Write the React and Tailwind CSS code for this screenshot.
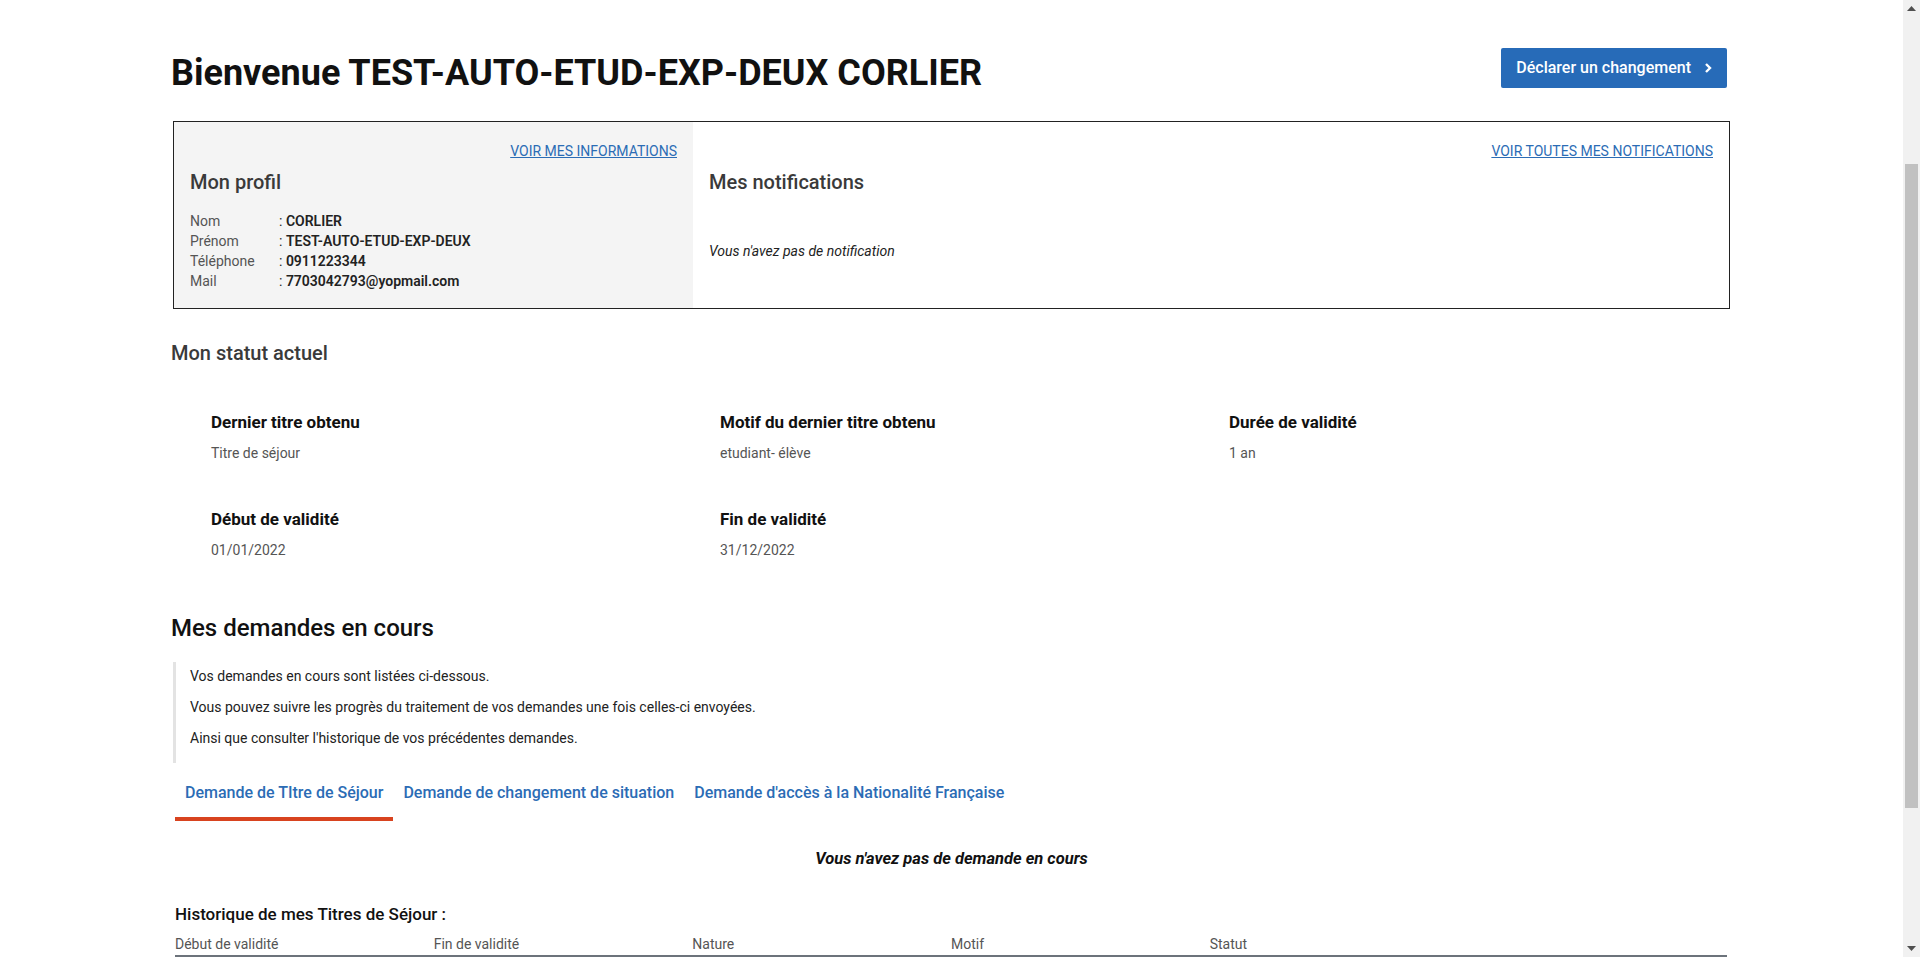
import React from 'react';

const profile = [
  { label: 'Nom', value: 'CORLIER' },
  { label: 'Prénom', value: 'TEST-AUTO-ETUD-EXP-DEUX' },
  { label: 'Téléphone', value: '0911223344' },
  { label: 'Mail', value: '7703042793@yopmail.com' },
];

const statut = [
  { label: 'Dernier titre obtenu', value: 'Titre de séjour' },
  { label: 'Motif du dernier titre obtenu', value: 'etudiant- élève' },
  { label: 'Durée de validité', value: '1 an' },
  { label: 'Début de validité', value: '01/01/2022' },
  { label: 'Fin de validité', value: '31/12/2022' },
];

const tabs = [
  'Demande de TItre de Séjour',
  'Demande de changement de situation',
  "Demande d'accès à la Nationalité Française",
];

const columns = ['Début de validité', 'Fin de validité', 'Nature', 'Motif', 'Statut', ''];

const ScrollBar = () => (
  <div className="w-[17px] shrink-0 bg-[#f1f1f1] flex flex-col items-center">
    <div className="h-[17px] flex items-center justify-center">
      <svg width="9" height="6" viewBox="0 0 9 6">
        <polygon points="4.5,0 9,5 0,5" fill="#505050" />
      </svg>
    </div>
    <div className="h-[147px]" />
    <div className="w-[13px] h-[644px] bg-[#c1c1c1]" />
    <div className="flex-1" />
    <div className="h-[17px] flex items-center justify-center">
      <svg width="9" height="6" viewBox="0 0 9 6">
        <polygon points="0,0 9,0 4.5,5" fill="#505050" />
      </svg>
    </div>
  </div>
);

export default function App() {
  return (
    <div className="flex h-screen overflow-hidden bg-white text-[#161616] font-[Roboto,'Liberation_Sans',sans-serif]">
      <main className="flex-1 overflow-hidden">
        <div className="mx-auto w-[1557px] pt-[47px]">
          {/* en-tête */}
          <div className="flex items-start justify-between">
            <h1 className="mt-[6px] -ml-[2px] text-[36px] leading-[40px] font-bold text-[#111]">
              Bienvenue TEST-AUTO-ETUD-EXP-DEUX CORLIER
            </h1>
            <button className="mr-[3px] mt-[1px] flex h-[40px] items-center gap-[13px] rounded-[2px] bg-[#276bb8] px-[15px] text-[16px] font-medium text-white">
              Déclarer un changement
              <svg width="8" height="12" viewBox="0 0 8 12" fill="none">
                <polyline points="2,2 6,6 2,10" stroke="white" strokeWidth="2.4" />
              </svg>
            </button>
          </div>

          {/* profil + notifications */}
          <div className="mt-[28px] grid h-[188px] grid-cols-[519px_1fr] border border-[#222]">
            <div className="bg-[#f4f4f4] px-[16px] pt-[21px]">
              <div className="flex justify-end">
                <a href="#" className="text-[14px] leading-[17px] text-[#2b6cb5] underline">
                  VOIR MES INFORMATIONS
                </a>
              </div>
              <h2 className="mt-[9px] text-[20px] leading-[26px] font-medium text-[#3a3a3a]">Mon profil</h2>
              <div className="mt-[16px] text-[14px] leading-[20px]">
                {profile.map((row) => (
                  <div key={row.label} className="flex">
                    <span className="w-[89px] text-[#555]">{row.label}</span>
                    <span className="font-semibold text-[#222]">
                      <span className="font-normal">: </span>
                      {row.value}
                    </span>
                  </div>
                ))}
              </div>
            </div>
            <div className="px-[16px] pt-[21px]">
              <div className="flex justify-end">
                <a href="#" className="text-[14px] leading-[17px] text-[#2b6cb5] underline">
                  VOIR TOUTES MES NOTIFICATIONS
                </a>
              </div>
              <h2 className="mt-[9px] text-[20px] leading-[26px] font-medium text-[#3a3a3a]">Mes notifications</h2>
              <p className="mt-[46px] text-[14px] leading-[20px] italic text-[#222]">
                Vous n'avez pas de notification
              </p>
            </div>
          </div>

          {/* statut */}
          <h2 className="mt-[31px] -ml-[2px] text-[20px] leading-[26px] font-medium text-[#3a3a3a]">Mon statut actuel</h2>
          <div className="mt-[44px] grid grid-cols-[509px_509px_1fr] gap-y-[44px] pl-[38px]">
            {statut.map((item) => (
              <div key={item.label}>
                <div className="text-[17px] leading-[24px] font-bold text-[#111]">{item.label}</div>
                <div className="mt-[9px] text-[14px] leading-[20px] text-[#555]">{item.value}</div>
              </div>
            ))}
          </div>

          {/* demandes */}
          <h2 className="mt-[52px] -ml-[2px] text-[24px] leading-[32px] font-medium text-[#111]">Mes demandes en cours</h2>
          <div className="mt-[18px] border-l-[3px] border-[#e3e3e3] py-[4px] pl-[14px] text-[14px] leading-[20px] text-[#222]">
            <p className="mb-[11px]">Vos demandes en cours sont listées ci-dessous.</p>
            <p className="mb-[11px]">
              Vous pouvez suivre les progrès du traitement de vos demandes une fois celles-ci envoyées.
            </p>
            <p className="mb-[11px]">Ainsi que consulter l'historique de vos précédentes demandes.</p>
          </div>

          <div className="mt-[6px] ml-[2px] flex">
            {tabs.map((tab, i) => (
              <button
                key={tab}
                className={
                  i === 0
                    ? 'border-b-4 border-[#d8431f] px-[10px] pt-[12px] pb-[12px] text-[16px] leading-[24px] font-medium text-[#2b6cb5]'
                    : 'border-b-4 border-transparent px-[10px] pt-[12px] pb-[12px] text-[16px] leading-[24px] font-medium text-[#2b6cb5]'
                }
              >
                {tab}
              </button>
            ))}
          </div>

          <p className="mt-[28px] text-center text-[16.5px] leading-[20px] font-bold italic text-[#111]">
            Vous n'avez pas de demande en cours
          </p>

          <h3 className="mt-[33px] ml-[2px] text-[17px] leading-[24px] font-medium text-[#111]">
            Historique de mes Titres de Séjour :
          </h3>
          <div className="mt-[8px] ml-[2px] mr-[3px] grid grid-cols-6 border-b-[3px] border-[#6c737b] pb-[1px] text-[14px] leading-[20px] text-[#555]">
            {columns.map((col, i) => (
              <div key={i}>{col}</div>
            ))}
          </div>
        </div>
      </main>
      <ScrollBar />
    </div>
  );
}
